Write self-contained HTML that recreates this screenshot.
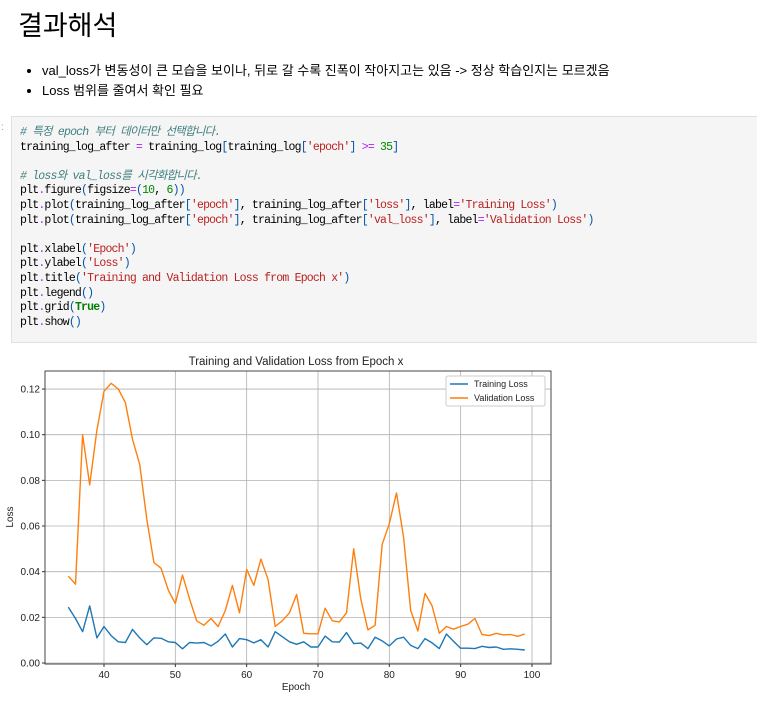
<!DOCTYPE html>
<html><head><meta charset="utf-8">
<style>
body{margin:0;width:757px;height:702px;background:#fff;overflow:hidden;font-family:"Liberation Sans","Noto Sans CJK KR",sans-serif;color:#000;position:relative}
h1{position:absolute;left:18px;top:6px;margin:0;font-weight:normal;font-size:27px;line-height:40px;font-family:"Liberation Sans","Noto Sans CJK KR",sans-serif}
ul{position:absolute;left:0;top:61px;margin:0;padding-left:42px;font-size:13px;line-height:20px}
li{margin:0}
.cell{position:absolute;left:11px;top:116px;width:750px;height:227px;background:#f5f5f5;border:1px solid #e0e0e0;box-sizing:border-box}
pre{position:absolute;left:20px;top:126px;margin:0;font-family:"Liberation Mono","Noto Sans CJK KR",monospace;font-size:11.5px;letter-spacing:-0.8px;line-height:14.6px;color:#000}
.c{color:#408080;font-style:italic}.s{color:#ba2121}.o{color:#aa22ff}.n{color:#080}.k{color:#008000;font-weight:bold}.p{color:#0055aa}
.colon{position:absolute;left:1px;top:122px;font-size:10px;color:#999}
svg{position:absolute;left:0;top:350px}
</style></head><body>
<h1>결과해석</h1>
<ul><li>val_loss가 변동성이 큰 모습을 보이나, 뒤로 갈 수록 진폭이 작아지고는 있음 -&gt; 정상 학습인지는 모르겠음</li><li>Loss 범위를 줄여서 확인 필요</li></ul>
<div class="colon">:</div>
<div class="cell"></div>
<pre><span class="c"># 특정 epoch 부터 데이터만 선택합니다.</span>
training_log_after <span class="o">=</span> training_log<span class="p">[</span>training_log<span class="p">[</span><span class="s">'epoch'</span><span class="p">]</span> <span class="o">&gt;=</span> <span class="n">35</span><span class="p">]</span>

<span class="c"># loss와 val_loss를 시각화합니다.</span>
plt<span class="o">.</span>figure<span class="p">(</span>figsize<span class="o">=</span><span class="p">(</span><span class="n">10</span>, <span class="n">6</span><span class="p">))</span>
plt<span class="o">.</span>plot<span class="p">(</span>training_log_after<span class="p">[</span><span class="s">'epoch'</span><span class="p">]</span>, training_log_after<span class="p">[</span><span class="s">'loss'</span><span class="p">]</span>, label<span class="o">=</span><span class="s">'Training Loss'</span><span class="p">)</span>
plt<span class="o">.</span>plot<span class="p">(</span>training_log_after<span class="p">[</span><span class="s">'epoch'</span><span class="p">]</span>, training_log_after<span class="p">[</span><span class="s">'val_loss'</span><span class="p">]</span>, label<span class="o">=</span><span class="s">'Validation Loss'</span><span class="p">)</span>

plt<span class="o">.</span>xlabel<span class="p">(</span><span class="s">'Epoch'</span><span class="p">)</span>
plt<span class="o">.</span>ylabel<span class="p">(</span><span class="s">'Loss'</span><span class="p">)</span>
plt<span class="o">.</span>title<span class="p">(</span><span class="s">'Training and Validation Loss from Epoch x'</span><span class="p">)</span>
plt<span class="o">.</span>legend<span class="p">()</span>
plt<span class="o">.</span>grid<span class="p">(</span><span class="k">True</span><span class="p">)</span>
plt<span class="o">.</span>show<span class="p">()</span></pre>
<svg id="ch" width="757" height="352" font-family="Liberation Sans, sans-serif" font-size="10"></svg>
<script>
var val=[.038,.0345,.100,.078,.102,.119,.1225,.120,.114,.098,.087,.063,.044,.0415,.032,.026,.0385,.028,.0185,.0165,.0195,.016,.023,.034,.022,.041,.034,.0455,.0365,.016,.0185,.022,.030,.013,.0128,.0128,.024,.0185,.018,.022,.050,.028,.0145,.0165,.052,.061,.0745,.055,.023,.014,.0305,.025,.013,.016,.0148,.016,.017,.0195,.0125,.012,.013,.0123,.0125,.0117,.0127];
var tr=[.0245,.0195,.0137,.025,.011,.016,.012,.0093,.009,.0147,.011,.008,.011,.0108,.0093,.009,.0062,.009,.0087,.009,.0075,.0095,.0127,.007,.0107,.0102,.0088,.0102,.007,.0137,.0115,.0093,.0082,.0093,.007,.007,.0118,.0093,.0092,.0133,.0085,.0087,.0063,.0113,.0097,.0075,.0105,.0113,.0077,.0063,.0107,.0088,.0063,.0127,.0095,.0065,.0065,.0063,.0073,.0068,.007,.006,.0062,.006,.0057];
function X(e){return 104+(e-40)*7.133}
function Y(v){return 313-v*2283}
var L=45,R=551,T=21,B=314;
var s='';
s+='<text x="296" y="15" text-anchor="middle" font-size="11.5" fill="#222">Training and Validation Loss from Epoch x</text>';
for(var e=40;e<=100;e+=10){var x=X(e);s+='<line x1="'+x+'" y1="'+T+'" x2="'+x+'" y2="'+B+'" stroke="#b0b0b0" stroke-width="0.8"/>';s+='<line x1="'+x+'" y1="'+B+'" x2="'+x+'" y2="'+(B+3)+'" stroke="#333"/>';s+='<text x="'+x+'" y="'+(B+14)+'" text-anchor="middle" fill="#222">'+e+'</text>';}
for(var i=0;i<=6;i++){var v=i*0.02,y=Y(v);s+='<line x1="'+L+'" y1="'+y+'" x2="'+R+'" y2="'+y+'" stroke="#b0b0b0" stroke-width="0.8"/>';s+='<line x1="'+(L-3)+'" y1="'+y+'" x2="'+L+'" y2="'+y+'" stroke="#333"/>';s+='<text x="'+(L-5)+'" y="'+(y+3.5)+'" text-anchor="end" fill="#222">'+v.toFixed(2)+'</text>';}
function pl(a,c){var p=[];for(var i=0;i<a.length;i++)p.push(X(35+i).toFixed(1)+','+Y(a[i]).toFixed(1));return '<polyline points="'+p.join(' ')+'" fill="none" stroke="'+c+'" stroke-width="1.4" stroke-linejoin="round"/>';}
s+=pl(tr,'#1f77b4')+pl(val,'#ff7f0e');
s+='<rect x="'+L+'" y="'+T+'" width="'+(R-L)+'" height="'+(B-T)+'" fill="none" stroke="#333" stroke-width="0.9"/>';
s+='<text x="296" y="340" text-anchor="middle" fill="#222">Epoch</text>';
s+='<text transform="translate(13,167) rotate(-90)" text-anchor="middle" fill="#222">Loss</text>';
s+='<rect x="446" y="26" width="99" height="30" fill="#fff" stroke="#ccc" rx="2"/>';
s+='<line x1="450" y1="34" x2="468" y2="34" stroke="#1f77b4" stroke-width="1.4"/><text x="474" y="37" font-size="9" fill="#222">Training Loss</text>';
s+='<line x1="450" y1="48" x2="468" y2="48" stroke="#ff7f0e" stroke-width="1.4"/><text x="474" y="51" font-size="9" fill="#222">Validation Loss</text>';
document.getElementById('ch').innerHTML=s;
</script>
</body></html>
